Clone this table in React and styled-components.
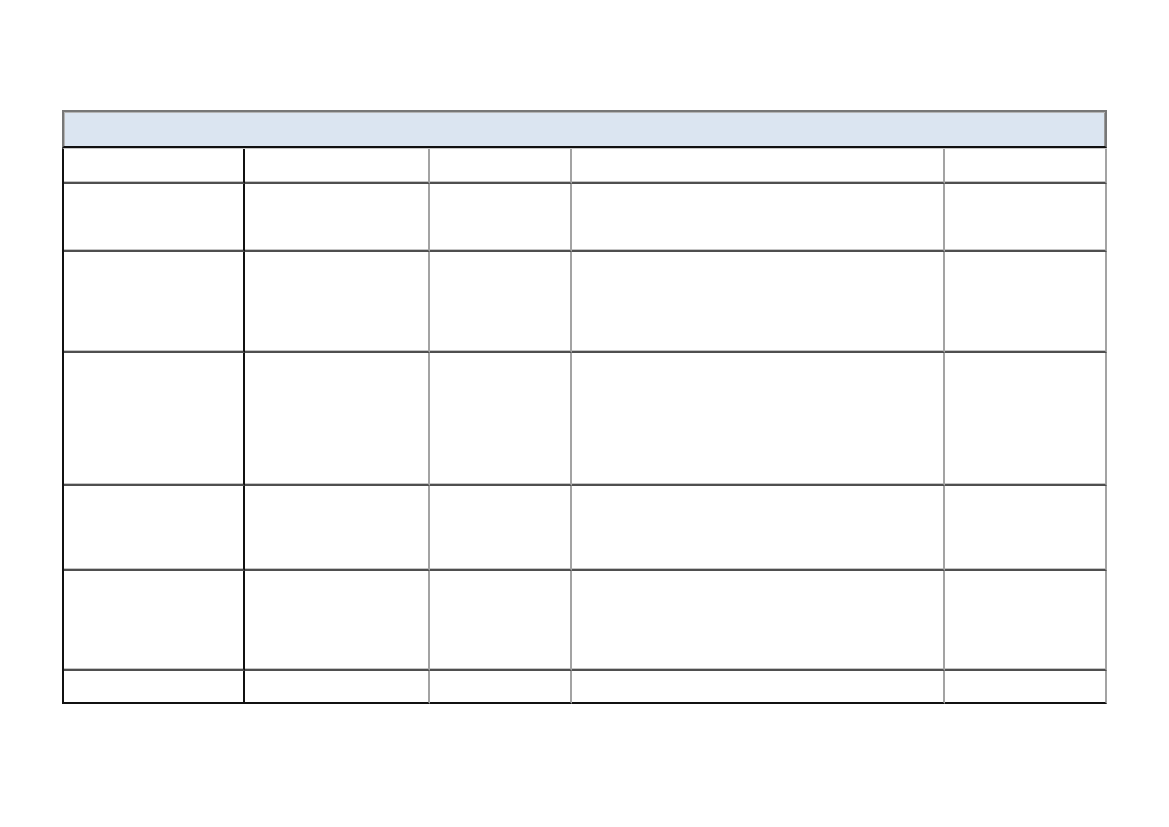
import React from "react";
import styled, { createGlobalStyle } from "styled-components";

const Global = createGlobalStyle`
  html, body { margin: 0; padding: 0; background: #ffffff; }
  body { font-family: "Liberation Sans", Arial, sans-serif; }
`;

const Page = styled.div`
  width: 1169px;
  height: 827px;
  padding: 110px 0 0 62px;
  box-sizing: border-box;
  background: #ffffff;
`;

const Sheet = styled.div`
  width: 1045px;
  display: flex;
  flex-direction: column;
`;

const TitleBar = styled.div`
  height: 38px;
  box-sizing: border-box;
  background: #dbe5f1;
  border: 2px solid #777777;
  border-bottom: 2px solid #111111;
  box-shadow: inset 1px 1px 0 #b4b4b4, inset -1px 0 0 #9a9a9a;
`;

const Grid = styled.div`
  display: grid;
  grid-template-columns: 181px 185px 142px 373px 162px;
  grid-template-rows: 35px 68px 101px 133px 85px 100px 33px;
  border-left: 2px solid #111111;
  border-top: 1px solid #c6c6c6;
`;

const Cell = styled.div`
  box-sizing: border-box;
  border-right: 2px solid ${(p) => (p.$first ? "#111111" : "#a3a3a3")};
  border-bottom: ${(p) => (p.$last ? "2px solid #111111" : "2px solid #4f4f4f")};
  box-shadow: ${(p) => (p.$last ? "none" : "inset 0 -1px 0 #c4c4c4")};
  background: #ffffff;
`;

const ROWS = 7;
const COLS = 5;

export default function App() {
  const cells = [];
  for (let r = 0; r < ROWS; r++) {
    for (let c = 0; c < COLS; c++) {
      cells.push(<Cell key={`${r}-${c}`} $first={c === 0} $last={r === ROWS - 1} />);
    }
  }
  return (
    <>
      <Global />
      <Page>
        <Sheet>
          <TitleBar />
          <Grid>{cells}</Grid>
        </Sheet>
      </Page>
    </>
  );
}
